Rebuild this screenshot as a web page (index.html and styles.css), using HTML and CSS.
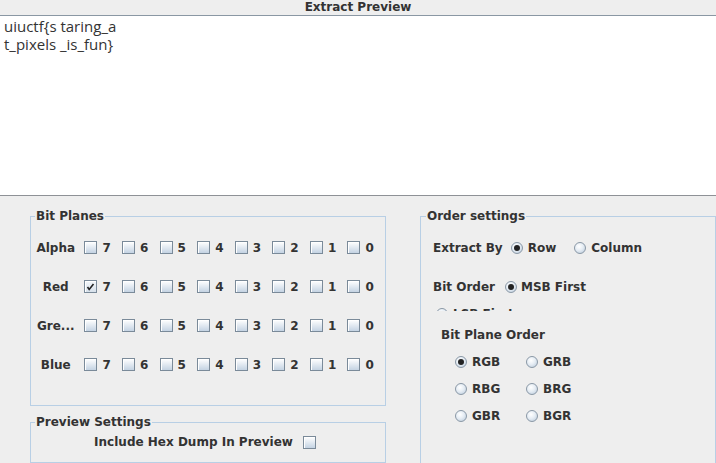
FILE: index.html
```html
<!DOCTYPE html>
<html>
<head>
<meta charset="utf-8">
<link rel="stylesheet" href="styles.css">
</head>
<body>
<div class="app">
  <div class="header">Extract Preview</div>
  <div class="preview">uiuctf{s taring_a<br>t_pixels _is_fun}</div>
  <div class="lower">
    <div class="left-col">
      <fieldset class="box bitplanes">
        <legend>Bit Planes</legend>
        <div class="bp-row"><span class="bp-label">Alpha</span>
          <span class="cb-item"><span class="cb"></span>7</span><span class="cb-item"><span class="cb"></span>6</span><span class="cb-item"><span class="cb"></span>5</span><span class="cb-item"><span class="cb"></span>4</span><span class="cb-item"><span class="cb"></span>3</span><span class="cb-item"><span class="cb"></span>2</span><span class="cb-item"><span class="cb"></span>1</span><span class="cb-item"><span class="cb"></span>0</span>
        </div>
        <div class="bp-row"><span class="bp-label">Red</span>
          <span class="cb-item"><span class="cb checked"><svg width="9" height="9" viewBox="0 0 9 9"><path d="M1.5 5 L3.2 7.5 L7.5 2" fill="none" stroke="#222" stroke-width="1.6"/></svg></span>7</span><span class="cb-item"><span class="cb"></span>6</span><span class="cb-item"><span class="cb"></span>5</span><span class="cb-item"><span class="cb"></span>4</span><span class="cb-item"><span class="cb"></span>3</span><span class="cb-item"><span class="cb"></span>2</span><span class="cb-item"><span class="cb"></span>1</span><span class="cb-item"><span class="cb"></span>0</span>
        </div>
        <div class="bp-row"><span class="bp-label">Gre...</span>
          <span class="cb-item"><span class="cb"></span>7</span><span class="cb-item"><span class="cb"></span>6</span><span class="cb-item"><span class="cb"></span>5</span><span class="cb-item"><span class="cb"></span>4</span><span class="cb-item"><span class="cb"></span>3</span><span class="cb-item"><span class="cb"></span>2</span><span class="cb-item"><span class="cb"></span>1</span><span class="cb-item"><span class="cb"></span>0</span>
        </div>
        <div class="bp-row"><span class="bp-label">Blue</span>
          <span class="cb-item"><span class="cb"></span>7</span><span class="cb-item"><span class="cb"></span>6</span><span class="cb-item"><span class="cb"></span>5</span><span class="cb-item"><span class="cb"></span>4</span><span class="cb-item"><span class="cb"></span>3</span><span class="cb-item"><span class="cb"></span>2</span><span class="cb-item"><span class="cb"></span>1</span><span class="cb-item"><span class="cb"></span>0</span>
        </div>
      </fieldset>
      <fieldset class="box previewset">
        <legend>Preview Settings</legend>
        <div class="hex-row"><span>Include Hex Dump In Preview</span><span class="cb"></span></div>
      </fieldset>
    </div>
    <fieldset class="box order">
      <legend>Order settings</legend>
      <div class="o-row extract"><span class="o-label">Extract By</span><span class="radio sel"></span><span class="r-text">Row</span><span class="radio col-radio"></span><span class="r-text">Column</span></div>
      <div class="bitorder">
        <div class="o-row"><span class="o-label">Bit Order</span><span class="radio sel"></span><span class="r-text">MSB First</span></div>
        <div class="o-row lsb"><span class="radio"></span><span class="r-text">LSB First</span></div>
      </div>
      <div class="bpo-label">Bit Plane Order</div>
      <div class="bpo-grid">
        <div class="r-item"><span class="radio sel"></span><span class="r-text">RGB</span></div>
        <div class="r-item"><span class="radio"></span><span class="r-text">GRB</span></div>
        <div class="r-item"><span class="radio"></span><span class="r-text">RBG</span></div>
        <div class="r-item"><span class="radio"></span><span class="r-text">BRG</span></div>
        <div class="r-item"><span class="radio"></span><span class="r-text">GBR</span></div>
        <div class="r-item"><span class="radio"></span><span class="r-text">BGR</span></div>
      </div>
    </fieldset>
  </div>
</div>
</body>
</html>
```

FILE: styles.css
```css
* { box-sizing: border-box; }
html, body { margin: 0; padding: 0; }
body {
  width: 716px;
  height: 463px;
  overflow: hidden;
  background: #eeeeee;
  font-family: "DejaVu Sans", sans-serif;
  font-weight: bold;
  font-size: 12px;
  color: #333333;
}
.app { width: 716px; height: 463px; display: flex; flex-direction: column; overflow: hidden; }
.header {
  flex: none;
  height: 16px;
  line-height: 15px;
  text-align: center;
  background: #eeeeee;
  border-bottom: 1px solid #8a97a3;
}
.preview {
  flex: none;
  height: 180px;
  background: #ffffff;
  border-bottom: 1px solid #8e9196;
  padding: 1px 4px;
  font-family: "Open Sans", sans-serif;
  font-weight: normal;
  font-size: 15px;
  line-height: 18px;
  color: #333333;
}
.lower {
  flex: 1;
  min-height: 0;
  display: flex;
  padding: 13px 0 0 30px;
  gap: 34px;
}
.left-col { width: 356px; flex: none; display: flex; flex-direction: column; }
.box {
  margin: 0;
  padding: 0;
  border: 1px solid #b8cfe5;
  min-width: 0;
}
.box legend {
  margin-left: 4px;
  padding: 0 1px;
  line-height: 14px;
  font-size: 12px;
}
.bitplanes { flex: none; height: 197px; padding-top: 5px; }
.bp-row { height: 39px; display: flex; align-items: center; }
.bp-label { width: 50px; margin-right: 4px; text-align: center; }
.cb-item { width: 38px; display: flex; align-items: center; }
.cb {
  width: 13px;
  height: 13px;
  border: 1px solid #7a8a99;
  background: linear-gradient(#ffffff, #c4d3e3);
  box-shadow: inset 1px 1px 0 #ffffff;
  margin-right: 5px;
  display: flex;
  align-items: center;
  justify-content: center;
  flex: none;
}
.cb.checked { background: linear-gradient(#f4f7fa, #d7e1eb); }
.previewset { flex: none; margin-top: 9px; height: 48px; padding-top: 3px; }
.hex-row {
  height: 20px;
  display: flex;
  align-items: center;
  justify-content: center;
  gap: 10px;
  padding-right: 6px;
}
.hex-row .cb { margin-right: 0; }
.order {
  flex: none;
  width: 296px;
  height: 270px;
  border-bottom: none;
}
.order legend { margin-left: 5px; }
.o-row { height: 24px; display: flex; align-items: center; }
.extract { margin-top: 13px; padding-left: 12px; }
.o-label { margin-right: 8px; }
.radio {
  width: 12px;
  height: 12px;
  border-radius: 50%;
  border: 1px solid #8a98a6;
  background: radial-gradient(circle at 40% 35%, #ffffff 0%, #e6edf4 45%, #b6c7d9 100%);
  margin-right: 5px;
  display: flex;
  align-items: center;
  justify-content: center;
  flex: none;
}
.radio.sel::after {
  content: "";
  width: 6px;
  height: 6px;
  border-radius: 50%;
  background: #222222;
}
.col-radio { margin-left: 18px; }
.bitorder {
  height: 51px;
  overflow: hidden;
  padding: 15px 0 0 12px;
}
.bitorder .o-label { margin-right: 10px; }
.bitorder .radio.sel { margin-right: 4px; }
.lsb { margin-top: 3px; padding-left: 3px; }
.lsb .radio { margin-right: 5px; }
.bpo-label {
  margin-top: 16px;
  line-height: 16px;
  padding-left: 20px;
}
.bpo-grid {
  margin-top: 5px;
  padding-left: 34px;
  display: grid;
  grid-template-columns: 71px 80px;
  grid-auto-rows: 27px;
}
.r-item { display: flex; align-items: center; }
```
